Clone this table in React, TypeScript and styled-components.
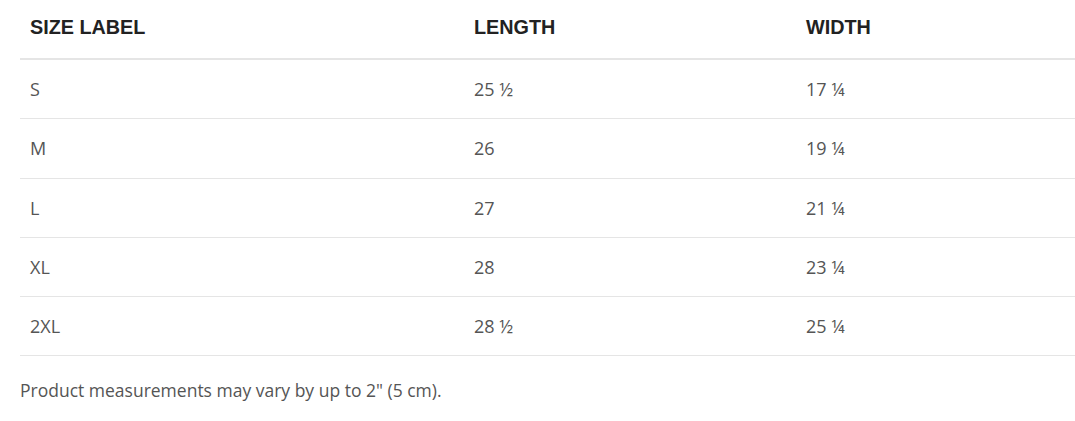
import React from "react";
import styled, { createGlobalStyle } from "styled-components";

const GlobalStyle = createGlobalStyle`
    html, body {
        margin: 0;
        padding: 0;
        background: #ffffff;
    }
`;

const Wrapper = styled.div`
    padding: 0 0 0 20px;
    font-family: "Open Sans", Lato, sans-serif;
    color: #555555;
`;

const Table = styled.div`
    display: grid;
    grid-template-columns: 444px 332px 1fr;
`;

const HeadCell = styled.div`
    height: 60px;
    display: flex;
    align-items: center;
    padding: 0 10px 3px;
    font-family: "Liberation Sans", Arial, sans-serif;
    font-weight: 700;
    font-size: 19.8px;
    color: #222222;
    border-bottom: 2px solid #e5e5e5;
    box-sizing: border-box;
`;

const Cell = styled.div`
    height: 59.25px;
    display: flex;
    align-items: center;
    padding: 0 10px;
    font-size: 18px;
    color: #555555;
    border-bottom: 1px solid #e5e5e5;
    box-sizing: border-box;
`;

const Note = styled.p`
    margin: 22px 0 0;
    font-size: 17.5px;
    color: #555555;
`;

type Row = { size: string; length: string; width: string };

const rows: Row[] = [
    { size: "S", length: "25 ½", width: "17 ¼" },
    { size: "M", length: "26", width: "19 ¼" },
    { size: "L", length: "27", width: "21 ¼" },
    { size: "XL", length: "28", width: "23 ¼" },
    { size: "2XL", length: "28 ½", width: "25 ¼" },
];

export default function App() {
    return (
        <Wrapper>
            <GlobalStyle />
            <Table>
                <HeadCell>SIZE LABEL</HeadCell>
                <HeadCell>LENGTH</HeadCell>
                <HeadCell>WIDTH</HeadCell>
                {rows.map(row => (
                    <React.Fragment key={row.size}>
                        <Cell>{row.size}</Cell>
                        <Cell>{row.length}</Cell>
                        <Cell>{row.width}</Cell>
                    </React.Fragment>
                ))}
            </Table>
            <Note>Product measurements may vary by up to 2" (5 cm).</Note>
        </Wrapper>
    );
}
